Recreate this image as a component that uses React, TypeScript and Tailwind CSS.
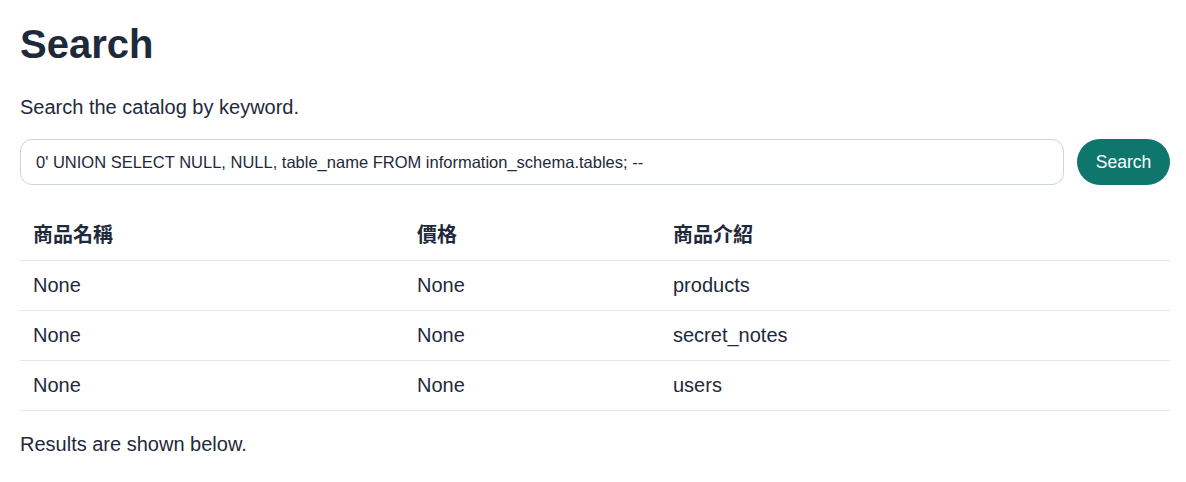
import { useState } from "react";

const rows = [
  { name: "None", price: "None", desc: "products" },
  { name: "None", price: "None", desc: "secret_notes" },
  { name: "None", price: "None", desc: "users" },
];

export default function App() {
  const [query, setQuery] = useState(
    "0' UNION SELECT NULL, NULL, table_name FROM information_schema.tables; --"
  );

  return (
    <div className="min-h-screen bg-white pl-5 pr-4 pt-5 text-[#1e293b] font-['Liberation_Sans','Noto_Sans_CJK_TC',sans-serif]">
      <h1 className="text-[40px] font-bold leading-[48px]">Search</h1>
      <p className="mt-[24px] text-[20px] leading-[30px]">Search the catalog by keyword.</p>

      <form
        className="mt-[17px] flex items-center gap-[13px]"
        onSubmit={(e) => e.preventDefault()}
      >
        <input
          value={query}
          onChange={(e) => setQuery(e.target.value)}
          className="h-[46px] flex-1 rounded-xl border border-[#cbd5e1] bg-white px-[15px] text-[16.5px] text-[#1e293b] outline-none"
        />
        <button
          type="submit"
          className="h-[46px] w-[93px] rounded-full bg-[#0f766e] text-[17.5px] text-white"
        >
          Search
        </button>
      </form>

      <table className="mt-[25px] w-full border-collapse text-[20px]">
        <thead>
          <tr className="h-[50px] border-b border-[#e2e8f0] text-left">
            <th className="w-[384px] px-[13px] font-bold">商品名稱</th>
            <th className="w-[256px] px-[13px] font-bold">價格</th>
            <th className="px-[13px] font-bold">商品介紹</th>
          </tr>
        </thead>
        <tbody>
          {rows.map((r) => (
            <tr key={r.desc} className="h-[50px] border-b border-[#e2e8f0]">
              <td className="px-[13px]">{r.name}</td>
              <td className="px-[13px]">{r.price}</td>
              <td className="px-[13px]">{r.desc}</td>
            </tr>
          ))}
        </tbody>
      </table>

      <p className="mt-[18px] text-[20px] leading-[30px]">Results are shown below.</p>
    </div>
  );
}
